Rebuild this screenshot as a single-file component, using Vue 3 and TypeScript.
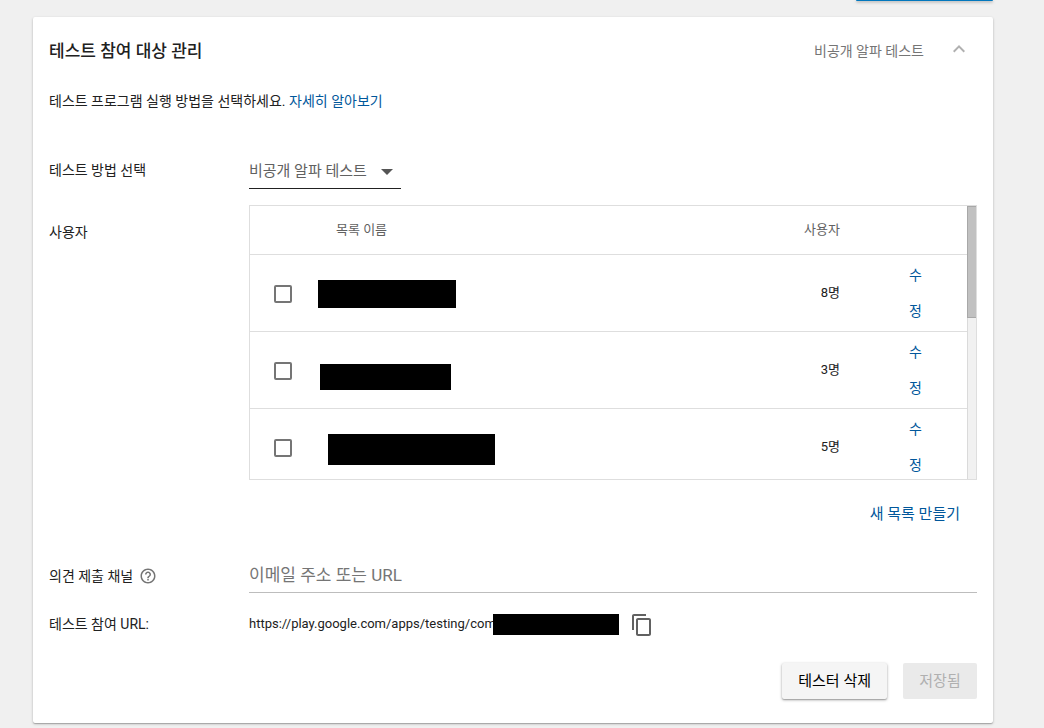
<script setup lang="ts">
import { ref } from 'vue'

interface TesterList {
  id: number
  count: string
  checked: boolean
  mask: { left: number; top: number; width: number; height: number }
}

const lists = ref<TesterList[]>([
  { id: 1, count: '8명', checked: false, mask: { left: 0, top: 2, width: 138, height: 28 } },
  { id: 2, count: '3명', checked: false, mask: { left: 2, top: 14, width: 131, height: 26 } },
  { id: 3, count: '5명', checked: false, mask: { left: 10, top: 5, width: 167, height: 31 } },
])
const method = ref('alpha')
const channel = ref('')

function maskStyle(m: TesterList['mask']) {
  return {
    marginLeft: `${m.left}px`,
    marginTop: `${m.top}px`,
    width: `${m.width}px`,
    height: `${m.height}px`,
  }
}
</script>

<template>
  <div class="page">
    <div class="topbar"><button class="primary" type="button"></button></div>
    <main class="card">
      <header class="card-head">
        <h1>테스트 참여 대상 관리</h1>
        <span class="status">비공개 알파 테스트</span>
        <button class="icon-btn collapse" type="button">
          <svg width="24" height="24" viewBox="0 0 24 24"><path d="M12 8l-6 6 1.41 1.41L12 10.83l4.59 4.58L18 14z" /></svg>
        </button>
      </header>

      <p class="intro">테스트 프로그램 실행 방법을 선택하세요. <a href="#">자세히 알아보기</a></p>

      <div class="row method-row">
        <label for="method">테스트 방법 선택</label>
        <div class="select-wrap">
          <select id="method" v-model="method">
            <option value="alpha">비공개 알파 테스트</option>
          </select>
          <svg class="arrow" width="12" height="6" viewBox="0 0 12 6"><path d="M0 0h12L6 6z" /></svg>
        </div>
      </div>

      <div class="row users-row">
        <span class="users-label">사용자</span>
        <div class="list-box">
          <div class="list-view">
            <table>
              <colgroup>
                <col class="c-check" />
                <col />
                <col class="c-users" />
                <col class="c-edit" />
              </colgroup>
              <thead>
                <tr>
                  <th></th>
                  <th class="name-head">목록 이름</th>
                  <th class="num">사용자</th>
                  <th></th>
                </tr>
              </thead>
              <tbody>
                <tr v-for="l in lists" :key="l.id">
                  <td class="check"><input v-model="l.checked" type="checkbox" :aria-labelledby="`list-${l.id}`" /></td>
                  <td class="name"><div :id="`list-${l.id}`" class="mask" :style="maskStyle(l.mask)"></div></td>
                  <td class="num">{{ l.count }}</td>
                  <td class="edit"><button type="button">수정</button></td>
                </tr>
              </tbody>
            </table>
          </div>
          <div class="track"><div class="thumb"></div></div>
        </div>
      </div>

      <div class="new-list"><a href="#">새 목록 만들기</a></div>

      <div class="row channel-row">
        <div class="label-help">
          <label for="channel">의견 제출 채널</label>
          <svg width="18" height="18" viewBox="0 0 24 24"><path d="M11 18h2v-2h-2v2zm1-16C6.48 2 2 6.48 2 12s4.48 10 10 10 10-4.48 10-10S17.52 2 12 2zm0 18c-4.41 0-8-3.59-8-8s3.59-8 8-8 8 3.59 8 8-3.59 8-8 8zm0-14c-2.21 0-4 1.79-4 4h2c0-1.1.9-2 2-2s2 .9 2 2c0 2-3 1.75-3 5h2c0-2.25 3-2.5 3-5 0-2.21-1.79-4-4-4z" /></svg>
        </div>
        <input id="channel" v-model="channel" type="text" placeholder="이메일 주소 또는 URL" />
      </div>

      <div class="row url-row">
        <span>테스트 참여 URL:</span>
        <div class="url">
          <span class="url-text">https://play.google.com/apps/testing/com</span>
          <span class="url-mask"></span>
          <button class="icon-btn copy" type="button">
            <svg width="24" height="24" viewBox="0 0 24 24"><path d="M16 1H4c-1.1 0-2 .9-2 2v14h2V3h12V1zm3 4H8c-1.1 0-2 .9-2 2v14c0 1.1.9 2 2 2h11c1.1 0 2-.9 2-2V7c0-1.1-.9-2-2-2zm0 16H8V7h11v14z" /></svg>
          </button>
        </div>
      </div>

      <footer class="actions">
        <button class="btn raised" type="button">테스터 삭제</button>
        <button class="btn saved" type="button" disabled>저장됨</button>
      </footer>
    </main>
  </div>
</template>

<style>
html,
body {
  margin: 0;
  background: #f0f0f0;
}
</style>

<style scoped>
.page {
  box-sizing: border-box;
  min-height: 100vh;
  padding: 0 51px 0 33px;
  background: #f0f0f0;
  color: #212121;
  font: 14px/24px Roboto, "Noto Sans CJK KR", sans-serif;
}
button,
input,
select {
  font-family: inherit;
}
button {
  padding: 0;
  border: 0;
  background: none;
  cursor: pointer;
}
a {
  color: #01579b;
  text-decoration: none;
}
svg {
  display: block;
}
.topbar {
  display: flex;
  justify-content: flex-end;
  align-items: flex-start;
  height: 17px;
}
.primary {
  width: 137px;
  height: 1px;
  border-radius: 0 0 2px 2px;
  background: #0277bd;
  box-shadow: 0 1px 3px rgba(0, 0, 0, 0.5);
}
.card {
  padding: 0 16px 24px;
  border-radius: 2px;
  background: #fff;
  box-shadow: 0 1px 3px rgba(0, 0, 0, 0.2), 0 1px 1px rgba(0, 0, 0, 0.2);
}
.card-head {
  display: flex;
  align-items: center;
  height: 68px;
}
h1 {
  flex: 1;
  margin: 0;
  font-size: 17px;
  font-weight: 500;
}
.status {
  margin-right: 23px;
  color: #757575;
}
.collapse {
  margin: 0 6px 4px 0;
  fill: #b0b0b0;
}
.intro {
  margin: 4px 0 40px;
}
.row {
  display: grid;
  grid-template-columns: 200px minmax(0, 1fr);
}
.method-row {
  line-height: 34px;
}
.select-wrap {
  position: relative;
  width: 152px;
}
select {
  display: block;
  appearance: none;
  width: 100%;
  height: 36px;
  padding: 0;
  border: 0;
  border-bottom: 1px solid #212121;
  border-radius: 0;
  background: none;
  color: #616161;
  font-size: 15px;
}
.arrow {
  position: absolute;
  top: 16px;
  right: 8px;
  fill: #555;
  pointer-events: none;
}
.users-row {
  margin-top: 16px;
}
.users-label {
  margin-top: 15px;
}
.list-box {
  display: flex;
  height: 273px;
  border: 1px solid #dedede;
}
.list-view {
  flex: 1;
  overflow: hidden;
}
.track {
  box-sizing: border-box;
  width: 9px;
  border-left: 1px solid #dadada;
  background: #f1f1f1;
}
.thumb {
  box-sizing: border-box;
  height: 112px;
  margin-left: -1px;
  border: 1px solid #a8a8a8;
  border-right: 0;
  background: #c1c1c1;
}
table {
  width: 100%;
  table-layout: fixed;
  border-collapse: separate;
  border-spacing: 0;
}
.c-check {
  width: 68px;
}
.c-users {
  width: 150px;
}
.c-edit {
  width: 103px;
}
th,
td {
  padding: 0;
  border-bottom: 1px solid #dedede;
  text-align: left;
}
th {
  height: 48px;
  color: #616161;
  font-size: 13px;
  font-weight: 400;
}
td {
  height: 76px;
  font-size: 13px;
}
.name-head {
  padding-left: 18px;
}
th.num,
td.num {
  padding-right: 24px;
  text-align: right;
}
.check input {
  display: block;
  appearance: none;
  box-sizing: border-box;
  width: 18px;
  height: 18px;
  margin: 2px 0 0 24px;
  border: 2px solid #757575;
  border-radius: 2px;
}
.mask {
  background: #000;
}
td.edit {
  text-align: center;
}
.edit button {
  display: block;
  width: 14px;
  margin: 0 auto;
  color: #01579b;
  font-size: 14px;
  line-height: 36px;
  word-break: break-all;
}
.new-list {
  margin-top: 22px;
  padding-right: 17px;
  font-size: 15px;
  text-align: right;
}
.channel-row {
  margin-top: 30px;
}
.label-help {
  display: flex;
  align-items: center;
  gap: 6px;
  padding-top: 3px;
  fill: #757575;
}
.channel-row input {
  box-sizing: border-box;
  width: 100%;
  height: 37px;
  padding: 2px 0 0;
  border: 0;
  border-bottom: 1px solid #bdbdbd;
  background: none;
  color: #212121;
  font-size: 17px;
}
.channel-row input::placeholder {
  color: #757575;
  opacity: 1;
}
.url-row {
  margin-top: 20px;
  line-height: 22px;
}
.url {
  display: flex;
  align-items: flex-start;
}
.url-text {
  font-size: 13px;
}
.url-mask {
  width: 126px;
  height: 21px;
  margin: 1px 0 0 -3px;
  background: #000;
}
.copy {
  margin-left: 11px;
  fill: #616161;
}
.actions {
  display: flex;
  justify-content: flex-end;
  gap: 16px;
  margin-top: 26px;
}
.btn {
  min-width: 74px;
  height: 36px;
  padding: 0 16px 3px;
  border-radius: 2px;
  font-size: 15px;
}
.raised {
  background: #f5f5f5;
  color: #000;
  box-shadow: 0 1px 3px rgba(0, 0, 0, 0.35), 0 1px 1px rgba(0, 0, 0, 0.15);
}
.saved {
  background: #eaeaea;
  color: #b0b0b0;
  cursor: default;
}
</style>
